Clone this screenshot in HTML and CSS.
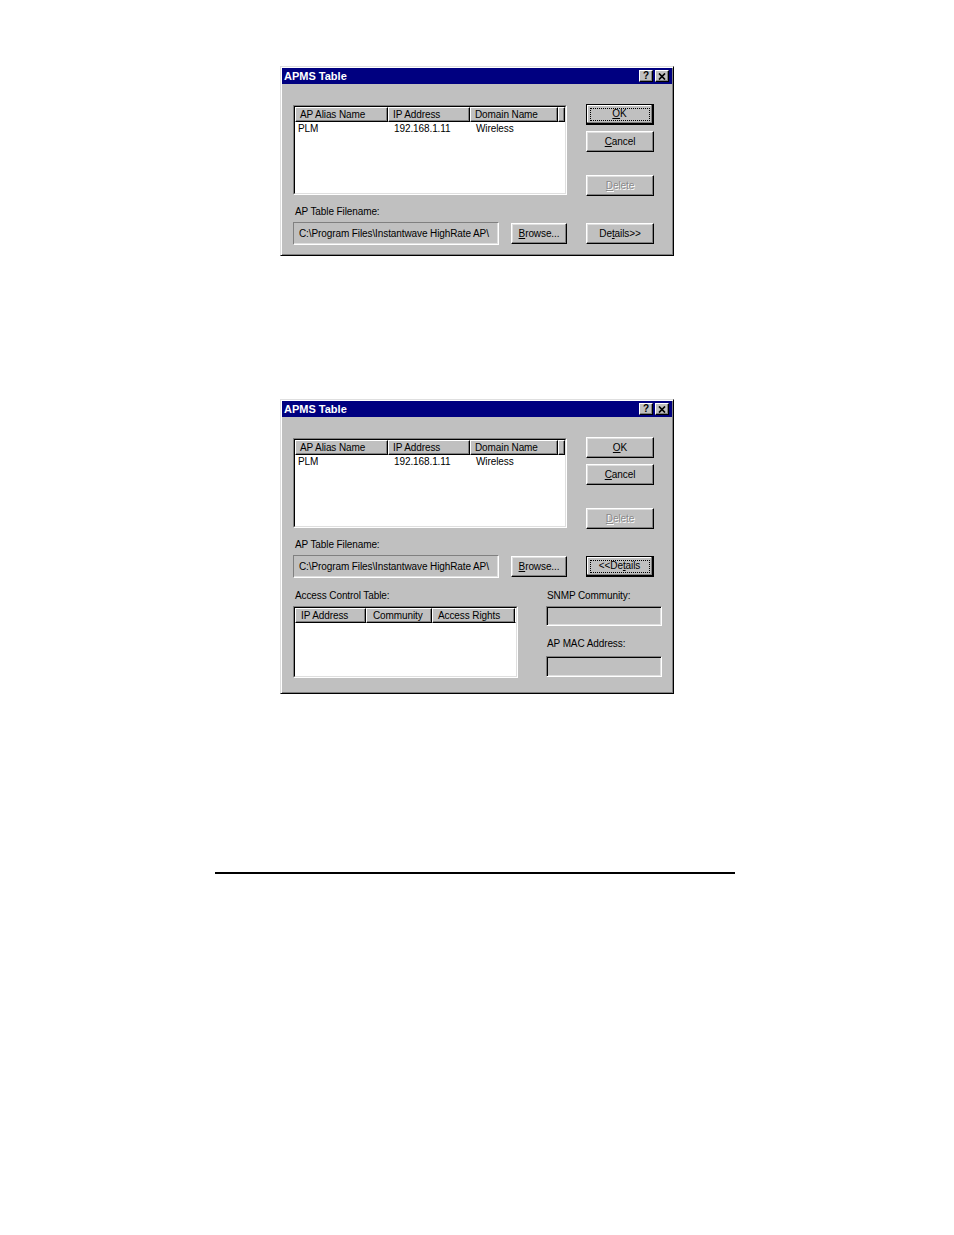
FILE: index.html
```html
<!DOCTYPE html>
<html>
<head>
<meta charset="utf-8">
<title>APMS Table</title>
<link rel="stylesheet" href="styles.css">
</head>
<body>
<div class="page">

  <div class="dialog d1">
    <div class="titlebar">
      <span class="title">APMS Table</span>
      <div class="tbtns">
        <span class="tbtn">?</span>
        <span class="tbtn"><svg width="8" height="7" viewBox="0 0 8 7"><path d="M1 0.5 L7 6.5 M7 0.5 L1 6.5" stroke="#000" stroke-width="1.7" fill="none"/></svg></span>
      </div>
    </div>
    <div class="body">
      <div class="toprow">
        <div class="listbox ap">
          <div class="listin">
            <div class="hdr">
              <span class="hc w1">AP Alias Name</span>
              <span class="hc w2">IP Address</span>
              <span class="hc w3">Domain Name</span>
              <span class="hc fill"></span>
            </div>
            <div class="row">
              <span class="w1">PLM</span>
              <span class="w2">192.168.1.11</span>
              <span class="w3">Wireless</span>
            </div>
          </div>
        </div>
        <div class="btncol">
          <div class="btn default"><span class="focus"><u>O</u>K</span></div>
          <div class="btn cancel"><span><u>C</u>ancel</span></div>
          <div class="btn disabled delete"><span><u>D</u>elete</span></div>
        </div>
      </div>
      <div class="label">AP Table Filename:</div>
      <div class="filerow">
        <div class="field">C:\Program Files\Instantwave HighRate AP\</div>
        <div class="btn browse"><span><u>B</u>rowse...</span></div>
        <div class="btn details"><span>De<u>t</u>ails&gt;&gt;</span></div>
      </div>
    </div>
  </div>

  <div class="dialog d2">
    <div class="titlebar">
      <span class="title">APMS Table</span>
      <div class="tbtns">
        <span class="tbtn">?</span>
        <span class="tbtn"><svg width="8" height="7" viewBox="0 0 8 7"><path d="M1 0.5 L7 6.5 M7 0.5 L1 6.5" stroke="#000" stroke-width="1.7" fill="none"/></svg></span>
      </div>
    </div>
    <div class="body">
      <div class="toprow">
        <div class="listbox ap">
          <div class="listin">
            <div class="hdr">
              <span class="hc w1">AP Alias Name</span>
              <span class="hc w2">IP Address</span>
              <span class="hc w3">Domain Name</span>
              <span class="hc fill"></span>
            </div>
            <div class="row">
              <span class="w1">PLM</span>
              <span class="w2">192.168.1.11</span>
              <span class="w3">Wireless</span>
            </div>
          </div>
        </div>
        <div class="btncol">
          <div class="btn"><span><u>O</u>K</span></div>
          <div class="btn cancel"><span><u>C</u>ancel</span></div>
          <div class="btn disabled delete"><span><u>D</u>elete</span></div>
        </div>
      </div>
      <div class="label">AP Table Filename:</div>
      <div class="filerow">
        <div class="field">C:\Program Files\Instantwave HighRate AP\</div>
        <div class="btn browse"><span><u>B</u>rowse...</span></div>
        <div class="btn details default"><span class="focus">&lt;&lt;De<u>t</u>ails</span></div>
      </div>
      <div class="extra">
        <div class="leftcol">
          <div class="label0">Access Control Table:</div>
          <div class="listbox acl">
            <div class="listin">
              <div class="hdr">
                <span class="hc a1">IP Address</span>
                <span class="hc a2">Community</span>
                <span class="hc a3">Access Rights</span>
                <span class="hc fill"></span>
              </div>
            </div>
          </div>
        </div>
        <div class="rightcol">
          <div class="label1">SNMP Community:</div>
          <div class="efield e1"></div>
          <div class="label1 second">AP MAC Address:</div>
          <div class="efield e2"></div>
        </div>
      </div>
    </div>
  </div>

  <div class="rule"></div>
</div>
</body>
</html>
```

FILE: styles.css
```css
body {
  margin: 0;
  background: #ffffff;
  font-family: "Liberation Sans", Arial, sans-serif;
  font-size: 10px;
  letter-spacing: -0.1px;
  color: #000;
}

.page {
  padding-top: 66px;
}

.dialog {
  margin-left: 280px;
  width: 394px;
  box-sizing: border-box;
  background: #c0c0c0;
  border: 1px solid;
  border-color: #dfdfdf #000 #000 #dfdfdf;
  box-shadow: inset 1px 1px #fff, inset -1px -1px #808080;
  padding: 1px;
}

.dialog + .dialog {
  margin-top: 143px;
}

.titlebar {
  height: 16px;
  background: #000080;
  display: flex;
  align-items: center;
  justify-content: space-between;
  padding: 0 3px 0 2px;
}

.title {
  color: #fff;
  font-weight: bold;
  font-size: 11px;
  line-height: 16px;
  letter-spacing: 0;
}

.tbtns {
  display: flex;
  gap: 2px;
}

.tbtn {
  width: 14px;
  height: 12px;
  box-sizing: border-box;
  background: #c0c0c0;
  border: 1px solid;
  border-color: #fff #000 #000 #fff;
  box-shadow: inset -1px -1px #808080;
  display: flex;
  align-items: center;
  justify-content: center;
  font-weight: bold;
  font-size: 10px;
  line-height: 1;
  color: #000;
}

.body {
  padding: 20px 18px 9px 11px;
}

.d2 .body {
  padding-bottom: 14px;
}

.toprow {
  display: flex;
  gap: 19px;
  align-items: flex-start;
}

.listbox {
  box-sizing: border-box;
  border: 1px solid;
  border-color: #808080 #fff #fff #808080;
  background: #fff;
}

.listbox.ap {
  width: 274px;
  height: 90px;
  margin-top: 1px;
}

.listbox.acl {
  width: 225px;
  height: 72px;
  margin-top: 4px;
}

.listin {
  height: 100%;
  box-sizing: border-box;
  border: 1px solid;
  border-color: #000 #dfdfdf #dfdfdf #000;
  overflow: hidden;
}

.hdr {
  display: flex;
  height: 15px;
}

.hc {
  box-sizing: border-box;
  height: 15px;
  background: #c0c0c0;
  border: 1px solid;
  border-color: #fff #000 #000 #fff;
  box-shadow: inset -1px -1px #808080;
  line-height: 13px;
  padding-left: 4px;
  white-space: nowrap;
  overflow: hidden;
  flex: none;
}

.hc.fill {
  flex: 1;
  padding: 0;
}

.w1 { width: 93px; flex: none; }
.w2 { width: 82px; flex: none; }
.w3 { width: 88px; flex: none; }

.a1 { width: 71px; padding-left: 5px; }
.a2 { width: 66px; padding-left: 6px; }
.a3 { width: 83px; padding-left: 5px; }

.row {
  display: flex;
  height: 12px;
  line-height: 12px;
  margin-top: 1px;
  white-space: nowrap;
}

.row .w1 { padding-left: 3px; box-sizing: border-box; }
.row .w2, .row .w3 { padding-left: 6px; box-sizing: border-box; }

.btncol {
  display: flex;
  flex-direction: column;
  width: 68px;
}

.btn {
  width: 68px;
  height: 21px;
  box-sizing: border-box;
  background: #c0c0c0;
  border: 1px solid;
  border-color: #fff #000 #000 #fff;
  box-shadow: inset -1px -1px #808080, inset 1px 1px #dfdfdf;
  display: flex;
  align-items: center;
  justify-content: center;
  line-height: 12px;
  white-space: nowrap;
  flex: none;
}

.btn.default {
  border-color: #000;
  box-shadow: inset -1px -1px #000, inset -2px -2px #808080, inset 1px 1px #fff;
}

.focus {
  box-sizing: border-box;
  width: calc(100% - 6px);
  height: calc(100% - 6px);
  border: 1px dotted #000;
  display: flex;
  align-items: center;
  justify-content: center;
  margin-left: -1px;
  margin-top: -1px;
}

.btn.cancel { margin-top: 6px; }
.btn.delete { margin-top: 23px; }

.btn.disabled {
  color: #8a8a8a;
  text-shadow: 1px 1px 0 #fff;
}

.label {
  margin-top: 10px;
  line-height: 12px;
  padding-left: 2px;
}

.filerow {
  display: flex;
  align-items: flex-start;
  margin-top: 4px;
}

.field {
  width: 206px;
  height: 23px;
  box-sizing: border-box;
  border: 1px solid;
  border-color: #808080 #fff #fff #808080;
  box-shadow: inset -1px -1px #dfdfdf;
  line-height: 21px;
  padding-left: 5px;
  white-space: nowrap;
  overflow: hidden;
}

.btn.browse {
  width: 56px;
  margin-left: 12px;
  margin-top: 1px;
}

.btn.details {
  margin-left: 19px;
  margin-top: 1px;
}

.extra {
  display: flex;
  gap: 28px;
  margin-top: 12px;
}

.leftcol {
  width: 225px;
}

.label0 {
  line-height: 12px;
  padding-left: 2px;
}

.rightcol {
  width: 116px;
}

.label1 {
  line-height: 12px;
  padding-left: 1px;
}

.label1.second {
  margin-top: 12px;
}

.efield {
  box-sizing: border-box;
  width: 116px;
  border: 1px solid;
  border-color: #808080 #fff #fff #808080;
  box-shadow: inset 1px 1px #000, inset -1px -1px #dfdfdf;
  background: #c0c0c0;
}

.efield.e1 {
  height: 20px;
  margin-top: 4px;
}

.efield.e2 {
  height: 21px;
  margin-top: 6px;
}

.rule {
  margin: 178px 0 0 215px;
  width: 520px;
  height: 2px;
  background: #000;
}
```
